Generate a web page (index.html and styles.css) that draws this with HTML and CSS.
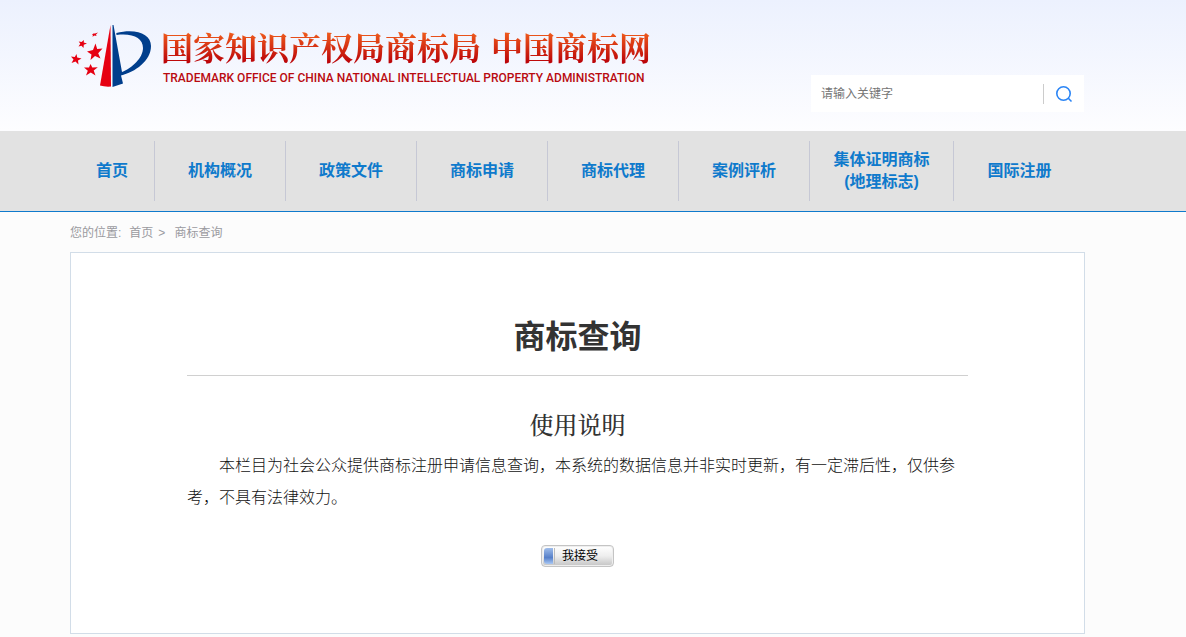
FILE: index.html
```html
<!DOCTYPE html>
<html lang="zh-CN">
<head>
<meta charset="utf-8">
<meta name="viewport" content="width=device-width, initial-scale=1">
<title>商标查询</title>
<link rel="stylesheet" href="styles.css">
</head>
<body>
<header class="header">
  <div class="container header-inner">
    <a class="brand" href="#">
      <svg class="logo" viewBox="0 0 82 66" aria-hidden="true">
        <g fill="#e60012">
          <path d="M40.500 1 L30 61.500 Q35 63 41 62.500Z"/>
          <path d="M25.500 19.500 L27.200 25 L32.500 24.500 L28.200 29.200 L30.500 34.500 L25 32 L20.500 36 L21.500 30.500 L17 27.500 L23 26Z"/>
          <path d="M20.500 40 L22.300 43.500 L27.800 43.200 L23.700 46.500 L25.500 51.500 L20.800 48.500 L16 51.500 L17.800 46.700 L14 43.500 L19 43.500Z"/>
          <path d="M6.500 30 L7.200 33.500 L11.500 34.500 L8 36.500 L8.500 40.500 L5.500 37.600 L1.500 39 L3.500 35.500 L1 32.500 L4.800 33Z"/>
          <path d="M14 16 L13.700 18.500 L17 19.500 L13.800 20.700 L13.500 24 L11.500 21.700 L8.500 22.500 L10.300 19.700 L8.700 17.500 L11.500 18Z"/>
          <path d="M23.500 9.500 L25 9.500 L28 8.500 L26 10.500 L26.500 12 L24.500 11.500 L22.500 12.700 L22.900 11 L22 10.500Z"/>
        </g>
        <path fill="#003e8c" d="M42.500 1 L43.500 1 L52 48 C62 44 73 34 73 24 C73 14 63 9 46.500 11 L46.300 9 C66 4 81 10 81 22 C81 37 65 48 51 51.500 L53 59.500 L42.500 63Z"/>
      </svg>
      <span class="brand-text">
        <span class="brand-cn"><span>国家知识产权局商标局</span><span>中国商标网</span></span>
        <span class="brand-en">TRADEMARK OFFICE OF CHINA NATIONAL INTELLECTUAL PROPERTY ADMINISTRATION</span>
      </span>
    </a>
    <form class="search">
      <input class="search-input" type="text" placeholder="请输入关键字" aria-label="请输入关键字">
      <button class="search-button" type="button" aria-label="搜索">
        <svg class="search-icon" viewBox="0 0 18 18" aria-hidden="true"><circle cx="8.500" cy="8.500" r="6.700"/><path d="M13.300 13.300L16.500 16.500"/></svg>
      </button>
    </form>
  </div>
</header>
<nav class="nav">
  <div class="container nav-list">
    <a class="nav-link" href="#">首页</a>
    <a class="nav-link" href="#">机构概况</a>
    <a class="nav-link" href="#">政策文件</a>
    <a class="nav-link" href="#">商标申请</a>
    <a class="nav-link" href="#">商标代理</a>
    <a class="nav-link" href="#">案例评析</a>
    <a class="nav-link" href="#">集体证明商标<br>(地理标志)</a>
    <a class="nav-link" href="#">国际注册</a>
  </div>
</nav>
<main class="container">
  <div class="crumbs"><span>您的位置:</span><a href="#">首页</a><span>&gt;</span><a class="crumb-last" href="#">商标查询</a></div>
  <section class="panel">
    <h1 class="title">商标查询</h1>
    <h2 class="subtitle">使用说明</h2>
    <p class="notice">本栏目为社会公众提供商标注册申请信息查询，本系统的数据信息并非实时更新，有一定滞后性，仅供参考，不具有法律效力。</p>
    <button class="accept" type="button"><span class="accept-mark"></span><span class="accept-label">我接受</span></button>
  </section>
</main>
</body>
</html>
```
FILE: styles.css
```css
* { box-sizing: border-box; }
body {
  margin: 0;
  background: #fcfcfc;
  color: #333;
  font-family: "Liberation Sans", "Noto Sans CJK SC", sans-serif;
  font-size: 12px;
}
a { color: inherit; text-decoration: none; }
.container { margin: 0 101px 0 70px; }

.header { background: linear-gradient(#ecf1fe, #fdfdff); }
.header-inner {
  display: flex;
  justify-content: space-between;
  align-items: flex-start;
  padding-bottom: 19px;
}
.brand { display: flex; padding-top: 24px; }
.logo { width: 82px; height: 66px; margin-right: 9px; }
.brand-text { display: flex; flex-direction: column; white-space: nowrap; }
.brand-cn {
  display: flex;
  gap: 10px;
  font: 700 32px/44px "Noto Serif CJK SC", "Noto Sans CJK SC", serif;
  background: linear-gradient(#ee5a1c 20%, #b90008 90%);
  background-clip: text;
  -webkit-background-clip: text;
  color: transparent;
}
.brand-en {
  padding-left: 2px;
  color: #b90a10;
  font-family: Roboto, "Liberation Sans", sans-serif;
  font-size: 12px;
  font-weight: 500;
  line-height: 20px;
}
.search {
  display: flex;
  align-items: center;
  width: 273px;
  height: 37px;
  margin: 75px 1px 0 0;
  background: #fff;
}
.search-input {
  flex: 1;
  min-width: 0;
  height: 37px;
  padding: 0 10px;
  border: 0;
  background: transparent;
  font: inherit;
}
.search-input::placeholder { color: #757575; }
.search-button {
  display: flex;
  align-items: center;
  justify-content: center;
  width: 41px;
  height: 20px;
  padding: 0;
  border: 0;
  border-left: 1px solid #ccc;
  background: none;
}
.search-icon {
  width: 18px;
  height: 18px;
  fill: none;
  stroke: #2b85f5;
  stroke-width: 1.6;
}

.nav { background: #e2e2e2; border-bottom: 1px solid #0f7acc; }
.nav-list {
  display: grid;
  grid-template-columns: 85fr repeat(5, 131fr) 144fr 131fr;
  padding: 10px 0;
}
.nav-link {
  display: flex;
  align-items: center;
  justify-content: center;
  height: 60px;
  border-right: 1px solid #c6c8d5;
  color: #0f7acc;
  font-size: 16px;
  font-weight: 700;
  line-height: 22px;
  text-align: center;
}
.nav-link:last-child { border-right: 0; }

.crumbs {
  display: flex;
  gap: 5px;
  padding-top: 2px;
  color: #9a9a9f;
  line-height: 38px;
}
.crumbs a:first-of-type { padding-left: 3px; }
.crumbs .crumb-last { padding-left: 4px; }
.panel {
  display: flex;
  flex-direction: column;
  align-items: center;
  margin-bottom: 3px;
  padding: 60px 116px 66px;
  border: 1px solid #d2dde8;
  background: #fff;
}
.title {
  width: 100%;
  margin: 0;
  padding-bottom: 14px;
  border-bottom: 1px solid #d0d0d0;
  font-size: 32px;
  line-height: 48px;
  text-align: center;
}
.subtitle {
  margin: 30px 0 0;
  font: 500 24px/36px "Noto Serif CJK SC", "Noto Sans CJK SC", serif;
}
.notice {
  width: 100%;
  margin: 8px 0 0;
  color: #111;
  font-size: 16px;
  font-weight: 300;
  line-height: 32px;
  text-indent: 32px;
}
.accept {
  display: flex;
  align-items: center;
  width: 73px;
  height: 22px;
  margin-top: 31px;
  padding: 2px;
  border: 1px solid #c4c4c4;
  border-radius: 4px;
  background: linear-gradient(#fff, #eee 50%, #c4c4c4);
  box-shadow: inset 0 0 0 1px #eee;
  color: #000;
  font: inherit;
}
.accept-mark {
  width: 9px;
  height: 16px;
  border-radius: 3px 0 0 3px;
  background: linear-gradient(#9fbdea, #567fc9 60%, #a9c8f4);
}
.accept-label {
  flex: 1;
  margin-left: 1px;
  padding-right: 6px;
  border-left: 1px solid #bbb;
  line-height: 16px;
  text-align: center;
}
```
